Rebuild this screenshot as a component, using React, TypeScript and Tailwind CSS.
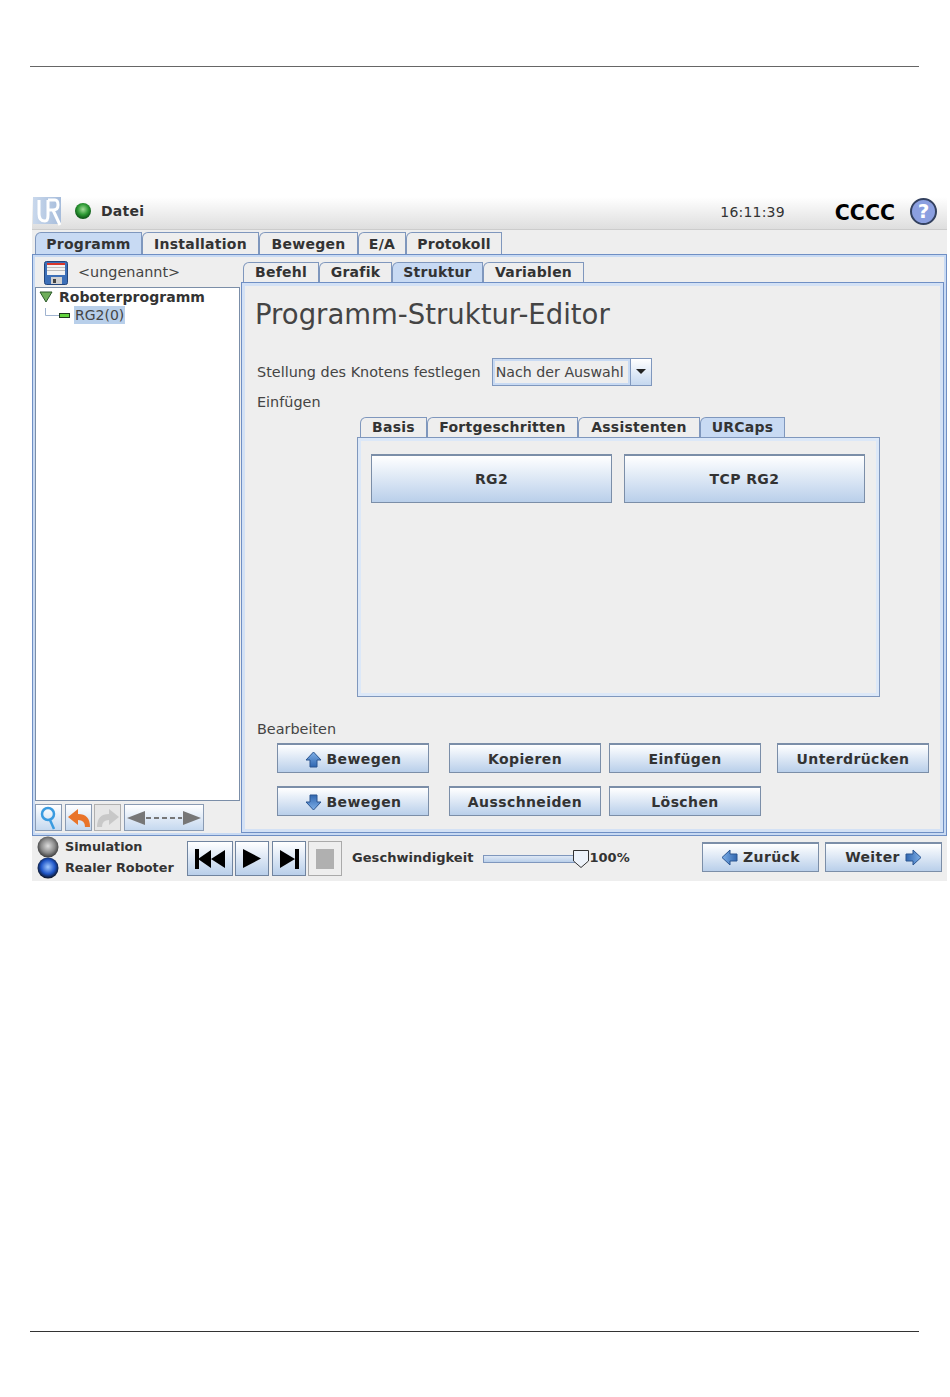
import React from "react";

const tabBase = "flex items-center justify-center border border-b-0 rounded-tl-[6px] border-[#7f97bd] font-bold text-[14px] tracking-[0.25px] text-[#333333]";

function Tab({ label, w, active, cls = "" }: { label: string; w: string; active?: boolean; cls?: string }) {
  return (
    <div className={`${tabBase} ${w} ${cls} h-full ${active ? "bg-[#c8daf3]" : "bg-[#eeeeee]"}`}>{label}</div>
  );
}

function Btn({ children, w, h = "h-[30px]", cls = "" }: { children: React.ReactNode; w: string; h?: string; cls?: string }) {
  return (
    <div className={`${w} ${h} ${cls} shrink-0 flex items-center justify-center gap-[5px] border border-[#7b8ea8] border-t-2 bg-gradient-to-b from-white to-[#b9cfea] font-bold text-[14px] tracking-[0.4px] text-[#333333]`}>
      {children}
    </div>
  );
}

function Arrow({ dir }: { dir: "up" | "down" | "left" | "right" }) {
  const rot = { up: 0, right: 90, down: 180, left: 270 }[dir];
  return (
    <svg width="17" height="17" viewBox="0 0 17 17" className="shrink-0" style={{ transform: `rotate(${rot}deg)` }}>
      <defs>
        <linearGradient id={`arrow-${dir}`} x1="0" y1="0" x2="0" y2="1">
          <stop offset="0" stopColor="#7fb0e8" />
          <stop offset="1" stopColor="#2f66b0" />
        </linearGradient>
      </defs>
      <path d="M8.5 1 L16 9 H12 V16 H5 V9 H1 Z" fill={`url(#arrow-${dir})`} stroke="#2a5590" strokeWidth="1" />
    </svg>
  );
}

function Ball({ c1, c2, c3 }: { c1: string; c2: string; c3: string }) {
  const id = `g${c1.slice(1)}`;
  return (
    <svg width="22" height="22" viewBox="0 0 22 22" className="shrink-0">
      <defs>
        <radialGradient id={id} cx="0.5" cy="0.45" r="0.55">
          <stop offset="0" stopColor={c1} />
          <stop offset="0.6" stopColor={c2} />
          <stop offset="1" stopColor={c3} />
        </radialGradient>
      </defs>
      <circle cx="11" cy="11" r="10.5" fill={`url(#${id})`} />
    </svg>
  );
}

function Transport({ w, children, disabled }: { w: string; children: React.ReactNode; disabled?: boolean }) {
  return (
    <div className={`${w} h-[35px] shrink-0 flex items-center justify-center border ${disabled ? "border-[#aaaaaa] bg-[#eeeeee]" : "border-[#70849f] bg-gradient-to-b from-white to-[#b9cfea]"}`}>
      {children}
    </div>
  );
}

export default function App() {
  return (
    <div className="w-[950px] h-[1397px] bg-white flex flex-col font-['DejaVu_Sans',sans-serif] overflow-hidden">
      <div className="mt-[66px] ml-[30px] w-[889px] h-px bg-[#666666]" />

      <div className="mt-[130px] ml-[32px] w-[915px] h-[684px] bg-[#eeeeee] flex flex-col shrink-0">
        {/* Header */}
        <div className="h-[33px] shrink-0 flex items-center pb-[4px] bg-gradient-to-b from-white to-[#dedede] border-b border-[#cccccc]">
          <svg width="29" height="29" viewBox="0 0 29 29" className="ml-px shrink-0">
            <defs>
              <linearGradient id="logo" x1="0" y1="0" x2="1" y2="0">
                <stop offset="0" stopColor="#c9d8ec" />
                <stop offset="1" stopColor="#a6bcdb" />
              </linearGradient>
            </defs>
            <rect width="28" height="27" fill="url(#logo)" />
            <path d="M6 3 V17 Q6 24 12 24 Q15 24 15 18 V3 M15 3 H22 Q25 3 25 8 Q25 13 20 13 H15 M20 13 L27 28" fill="none" stroke="#ffffff" strokeWidth="3" />
          </svg>
          <div className="ml-[12px] flex"><svg width="18" height="18" viewBox="0 0 18 18">
            <defs>
              <radialGradient id="gs" cx="0.5" cy="0.4" r="0.55">
                <stop offset="0" stopColor="#a5dc9a" />
                <stop offset="0.6" stopColor="#2e9a35" />
                <stop offset="1" stopColor="#0f5a18" />
              </radialGradient>
            </defs>
            <circle cx="9" cy="9" r="8" fill="url(#gs)" />
          </svg></div>
          <span className="ml-[9px] font-bold text-[14px] tracking-[0.25px] text-[#333333]">Datei</span>
          <span className="ml-auto mt-[2px] text-[14px] tracking-[0.2px] text-[#333333]">16:11:39</span>
          <span className="ml-[50px] mt-[4px] font-bold text-[20.5px] text-black">CCCC</span>
          <div className="ml-[15px] mr-[10px] w-[27px] h-[27px] rounded-full bg-[#8b9fe0] border-2 border-[#33415f] flex items-center justify-center text-white font-bold text-[20px]">?</div>
        </div>

        {/* Top tabs */}
        <div className="h-[22px] mt-[2px] ml-[3px] flex shrink-0">
          <Tab label="Programm" w="w-[107px]" cls="pt-px" active />
          <Tab label="Installation" w="w-[117px]" cls="pt-px" />
          <Tab label="Bewegen" w="w-[99px]" cls="pt-px" />
          <Tab label="E/A" w="w-[48px]" cls="pt-px" />
          <Tab label="Protokoll" w="w-[96px]" cls="pt-px" />
        </div>

        {/* Main */}
        <div className="h-[582px] w-[915px] shrink-0 border border-[#6f8fc4] shadow-[inset_0_0_0_2px_#c8daf3] flex px-[2px] pb-[2px]">
          {/* Left */}
          <div className="w-[205px] shrink-0 flex flex-col">
            <div className="h-[32px] shrink-0 flex items-center pl-[9px] pt-[3px]">
              <svg width="24" height="24" viewBox="0 0 24 24" className="shrink-0">
                <rect x="0.5" y="0.5" width="23" height="23" rx="2" fill="#3c6fb8" stroke="#22457c" />
                <rect x="3" y="2" width="18" height="12" fill="#f2f2f2" />
                <rect x="3" y="2" width="18" height="2" fill="#d8362a" />
                <rect x="3" y="6" width="18" height="1" fill="#bbbbbb" />
                <rect x="3" y="9" width="18" height="1" fill="#bbbbbb" />
                <rect x="7" y="16" width="11" height="7" fill="#d0d0d0" />
                <rect x="9" y="18" width="3" height="4" fill="#444444" />
              </svg>
              <span className="ml-[10px] text-[14.4px] text-[#444444]">&lt;ungenannt&gt;</span>
            </div>
            <div className="h-[514px] shrink-0 bg-white border border-[#7b8ea8]">
              <div className="h-[18px] flex items-center pl-[3px]">
                <svg width="14" height="12" viewBox="0 0 14 12" className="shrink-0">
                  <path d="M1 1 H13 L7 11 Z" fill="#6fae5a" stroke="#2d5a2a" />
                </svg>
                <span className="ml-[6px] font-bold text-[14px] tracking-[0.05px] text-[#333333]">Roboterprogramm</span>
              </div>
              <div className="h-[18px] flex items-center pl-[9px]">
                <svg width="29" height="14" viewBox="0 0 29 14" className="shrink-0">
                  <path d="M0.5 0 V7.5 H14" fill="none" stroke="#9fb3d0" />
                  <rect x="14.5" y="5.5" width="10" height="4" fill="#62d33e" stroke="#1f3a1f" />
                </svg>
                <span className="bg-[#b8cfea] text-[14px] text-[#444444] px-px h-[18px] leading-[18px]">RG2(0)</span>
              </div>
            </div>
            <div className="h-[27px] mt-[3px] flex shrink-0">
              <div className="w-[27px] h-full border border-[#8a9bb3] bg-gradient-to-b from-white to-[#c5d8ef] flex items-center justify-center">
                <svg width="20" height="24" viewBox="0 0 20 24">
                  <circle cx="9" cy="8" r="6" fill="none" stroke="#3a9be0" strokeWidth="2.5" />
                  <path d="M11 14 L15 23" stroke="#3a9be0" strokeWidth="2.5" />
                </svg>
              </div>
              <div className="ml-[3px] w-[27px] h-full border border-[#8a9bb3] bg-gradient-to-b from-white to-[#c5d8ef] flex items-center justify-center">
                <svg width="24" height="22" viewBox="0 0 24 22">
                  <path d="M1 10 L11 2 V7 Q23 7 23 20 H18 Q18 13 11 13 V18 Z" fill="#e9742a" />
                </svg>
              </div>
              <div className="ml-[2px] w-[27px] h-full border border-[#b0b0b0] bg-[#e6e6e6] flex items-center justify-center">
                <svg width="24" height="22" viewBox="0 0 24 22">
                  <path d="M23 10 L13 2 V7 Q1 7 1 20 H6 Q6 13 13 13 V18 Z" fill="#c8c8c8" />
                </svg>
              </div>
              <div className="ml-[3px] w-[80px] h-full border border-[#8a9bb3] bg-gradient-to-b from-white to-[#c5d8ef] flex items-center justify-center">
                <svg width="74" height="16" viewBox="0 0 74 16">
                  <path d="M0 8 L18 1 V15 Z M74 8 L56 1 V15 Z" fill="#777777" />
                  <path d="M19 8 H55" stroke="#777777" strokeWidth="2" strokeDasharray="5 3" />
                </svg>
              </div>
            </div>
          </div>

          {/* Right */}
          <div className="ml-px w-[703px] shrink-0 flex flex-col">
            <div className="h-[20px] mt-[7px] ml-[2px] flex shrink-0">
              <Tab label="Befehl" w="w-[76px]" cls="pb-px" />
              <Tab label="Grafik" w="w-[73px]" cls="pb-px" />
              <Tab label="Struktur" w="w-[91px]" cls="pb-px" active />
              <Tab label="Variablen" w="w-[101px]" cls="pb-px" />
            </div>
            <div className="h-[551px] shrink-0 border border-[#6f8fc4] shadow-[inset_0_0_0_3px_#d3e1f5] pl-[15px] flex flex-col">
              <div className="h-[32px] mt-[15px] ml-[-2px] text-[27.5px] leading-[32px] text-[#444444] whitespace-nowrap">Programm-Struktur-Editor</div>
              <div className="mt-[28px] h-[28px] flex items-center">
                <span className="pt-px text-[14.4px] text-[#444444] whitespace-nowrap">Stellung des Knotens festlegen</span>
                <div className="ml-[11px] w-[160px] h-[28px] flex border border-[#7f97bd]">
                  <div className="w-[137px] border-2 border-[#c8daf3] bg-[#eeeeee] text-[14.2px] text-[#444444] pl-px leading-[22px] whitespace-nowrap">Nach der Auswahl</div>
                  <div className="flex-1 border-l border-[#7f97bd] bg-gradient-to-b from-white to-[#c5d8ef] flex items-center justify-center">
                    <svg width="10" height="6" viewBox="0 0 10 6"><path d="M0 0 H10 L5 5 Z" fill="#222222" /></svg>
                  </div>
                </div>
              </div>
              <div className="mt-[7px] h-[18px] text-[14.4px] leading-[18px] text-[#444444]">Einfügen</div>

              <div className="ml-[103px] mt-[6px] h-[20px] flex shrink-0">
                <Tab label="Basis" w="w-[67px]" />
                <Tab label="Fortgeschritten" w="w-[151px]" />
                <Tab label="Assistenten" w="w-[122px]" />
                <Tab label="URCaps" w="w-[85px]" active />
              </div>
              <div className="ml-[100px] w-[523px] h-[260px] shrink-0 border border-[#7f97bd] shadow-[inset_0_0_0_3px_#dce8f8] pt-[16px] pl-[13px] flex gap-[12px] bg-[#eeeeee]">
                <Btn w="w-[241px]" h="h-[49px]">RG2</Btn>
                <Btn w="w-[241px]" h="h-[49px]">TCP RG2</Btn>
              </div>

              <div className="mt-[23px] h-[18px] text-[14.4px] leading-[18px] text-[#444444]">Bearbeiten</div>
              <div className="mt-[5px] ml-[20px] flex h-[30px]">
                <Btn w="w-[152px]" cls="pt-px"><Arrow dir="up" />Bewegen</Btn>
                <div className="w-[20px]" />
                <Btn w="w-[152px]" cls="pt-px">Kopieren</Btn>
                <div className="w-[8px]" />
                <Btn w="w-[152px]" cls="pt-px">Einfügen</Btn>
                <div className="w-[16px]" />
                <Btn w="w-[152px]" cls="pt-px">Unterdrücken</Btn>
              </div>
              <div className="mt-[13px] ml-[20px] flex h-[30px]">
                <Btn w="w-[152px]" cls="pt-px"><Arrow dir="down" />Bewegen</Btn>
                <div className="w-[20px]" />
                <Btn w="w-[152px]" cls="pt-px">Ausschneiden</Btn>
                <div className="w-[8px]" />
                <Btn w="w-[152px]" cls="pt-px">Löschen</Btn>
              </div>
            </div>
          </div>
        </div>

        {/* Bottom bar */}
        <div className="flex-1 flex items-center">
          <div className="ml-[5px] mb-[2px] flex flex-col w-[150px] shrink-0">
            <div className="flex items-center gap-[6px] h-[21px]">
              <Ball c1="#dddddd" c2="#8a8a8a" c3="#3a3a3a" />
              <span className="font-bold text-[12.8px] text-[#333333]">Simulation</span>
            </div>
            <div className="flex items-center gap-[6px] h-[21px]">
              <Ball c1="#a0c8ff" c2="#1f56c8" c3="#0a1020" />
              <span className="font-bold text-[12.8px] text-[#333333] whitespace-nowrap">Realer Roboter</span>
            </div>
          </div>
          <div className="flex shrink-0">
            <Transport w="w-[46px]"><svg width="30" height="20" viewBox="0 0 30 20"><path d="M0 0 H4 V20 H0 Z M3 10 L16 1 V19 Z M16 10 L30 1 V19 Z" fill="#000000" /></svg></Transport>
            <div className="ml-[2px]"><Transport w="w-[34px]"><svg width="18" height="19" viewBox="0 0 18 19"><path d="M0 0 L18 9.5 L0 19 Z" fill="#000000" /></svg></Transport></div>
            <div className="ml-[3px]"><Transport w="w-[34px]"><svg width="19" height="20" viewBox="0 0 19 20"><path d="M0 1 L15 10 L0 19 Z M15 0 H19 V20 H15 Z" fill="#000000" /></svg></Transport></div>
            <div className="ml-[2px]"><Transport w="w-[34px]" disabled><div className="w-[18px] h-[20px] bg-[#b0b0b0]" /></Transport></div>
          </div>
          <span className="ml-[10px] mb-[2px] font-bold text-[13px] tracking-[0.05px] text-[#333333]">Geschwindigkeit</span>
          <div className="ml-[9px] w-[92px] h-[8px] border border-[#7f97bd] bg-gradient-to-b from-[#dfe8f5] to-[#b9cfea] shrink-0" />
          <svg width="18" height="20" viewBox="0 0 18 20" className="ml-[-3px] shrink-0">
            <path d="M1.5 1.5 H16.5 V12 L9 18.5 L1.5 12 Z" fill="#eef3fa" stroke="#333333" />
          </svg>
          <span className="mb-[2px] font-bold text-[13px] text-[#333333]">100%</span>
          <div className="ml-auto mr-[5px] mb-[4px] flex gap-[6px]">
            <Btn w="w-[117px]"><Arrow dir="left" />Zurück</Btn>
            <Btn w="w-[117px]">Weiter<Arrow dir="right" /></Btn>
          </div>
        </div>
      </div>

      <div className="mt-[450px] ml-[30px] w-[889px] h-px bg-[#333333] shrink-0" />
    </div>
  );
}
